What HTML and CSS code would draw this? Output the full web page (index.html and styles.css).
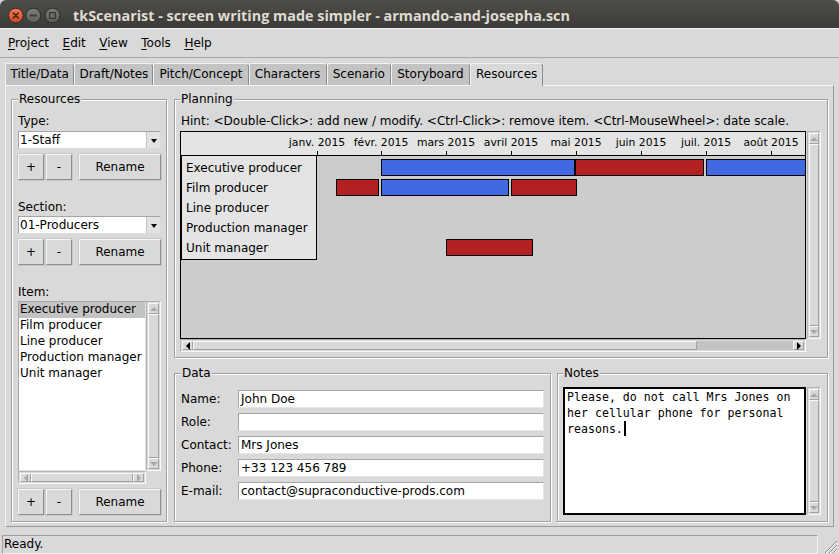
FILE: index.html
```html
<!DOCTYPE html>
<html>
<head>
<meta charset="utf-8">
<title>tkScenarist</title>
<link rel="stylesheet" href="styles.css">
</head>
<body>
<div class="window">
  <header class="titlebar">
    <svg class="wbtns" width="62" height="28" viewBox="0 0 62 28">
      <defs>
        <linearGradient id="gc" x1="0" y1="0" x2="0" y2="1"><stop offset="0" stop-color="#f47b55"/><stop offset="1" stop-color="#dc471c"/></linearGradient>
        <linearGradient id="gg" x1="0" y1="0" x2="0" y2="1"><stop offset="0" stop-color="#7f7e79"/><stop offset="1" stop-color="#5d5c58"/></linearGradient>
      </defs>
      <circle cx="15.8" cy="15.5" r="7.3" fill="url(#gc)" stroke="#2e2a27" stroke-width="1"/>
      <path d="M13.4 13.1 L18.2 17.9 M18.2 13.1 L13.4 17.9" stroke="#3f2a20" stroke-width="1.6" stroke-linecap="round"/>
      <circle cx="33.3" cy="15.5" r="7.3" fill="url(#gg)" stroke="#2e2d2a" stroke-width="1"/>
      <path d="M29.9 15.5 H36.7" stroke="#3a3935" stroke-width="1.8"/>
      <circle cx="52.5" cy="15.5" r="7.3" fill="url(#gg)" stroke="#2e2d2a" stroke-width="1"/>
      <rect x="49.6" y="12.6" width="5.8" height="5.8" fill="none" stroke="#3a3935" stroke-width="1.4"/>
    </svg>
    <div class="title">tkScenarist - screen writing made simpler - armando-and-josepha.scn</div>
  </header>

  <nav class="menubar">
    <span class="menu"><u>P</u>roject</span>
    <span class="menu"><u>E</u>dit</span>
    <span class="menu"><u>V</u>iew</span>
    <span class="menu"><u>T</u>ools</span>
    <span class="menu"><u>H</u>elp</span>
  </nav>

  <div class="notebook">
    <div class="tabs">
      <div class="tab">Title/Data</div>
      <div class="tab tight">Draft/Notes</div>
      <div class="tab">Pitch/Concept</div>
      <div class="tab">Characters</div>
      <div class="tab">Scenario</div>
      <div class="tab">Storyboard</div>
      <div class="tab sel">Resources</div>
    </div>
    <div class="pane">
      <fieldset class="lf res">
        <legend>Resources</legend>
        <div class="res-inner">
          <div class="lbl">Type:</div>
          <div class="combo"><span class="ctext">1-Staff</span><span class="carrow"></span></div>
          <div class="btnrow"><div class="btn sq">+</div><div class="btn sq">-</div><div class="btn wide">Rename</div></div>

          <div class="lbl gap">Section:</div>
          <div class="combo"><span class="ctext">01-Producers</span><span class="carrow"></span></div>
          <div class="btnrow"><div class="btn sq">+</div><div class="btn sq">-</div><div class="btn wide">Rename</div></div>

          <div class="lbl gap">Item:</div>
          <div class="listarea">
            <div class="listbox">
              <div class="li selitem">Executive producer</div>
              <div class="li">Film producer</div>
              <div class="li">Line producer</div>
              <div class="li">Production manager</div>
              <div class="li">Unit manager</div>
            </div>
            <div class="vsb"><span class="arr up"></span><span class="thumb"></span><span class="arr down"></span></div>
            <div class="hsb"><span class="arr left dis"></span><span class="thumb"></span><span class="arr right dis"></span></div>
          </div>
          <div class="btnrow"><div class="btn sq">+</div><div class="btn sq">-</div><div class="btn wide">Rename</div></div>
        </div>
      </fieldset>

      <div class="rightcol">
        <fieldset class="lf planning">
          <legend>Planning</legend>
          <div class="plan-inner">
            <div class="hint">Hint: &lt;Double-Click&gt;: add new / modify. &lt;Ctrl-Click&gt;: remove item. &lt;Ctrl-MouseWheel&gt;: date scale.</div>
            <div class="plangrid">
              <div class="canvas">
                <div class="gheader"></div>
                <span class="month" style="left:136px">janv. 2015</span>
                <span class="month" style="left:200px">févr. 2015</span>
                <span class="month" style="left:265px">mars 2015</span>
                <span class="month" style="left:330px">avril 2015</span>
                <span class="month" style="left:395px">mai 2015</span>
                <span class="month" style="left:460px">juin 2015</span>
                <span class="month" style="left:525px">juil. 2015</span>
                <span class="month" style="left:590px">août 2015</span>
                <span class="tick" style="left:136px"></span>
                <span class="tick" style="left:200px"></span>
                <span class="tick" style="left:265px"></span>
                <span class="tick" style="left:330px"></span>
                <span class="tick" style="left:395px"></span>
                <span class="tick" style="left:460px"></span>
                <span class="tick" style="left:525px"></span>
                <span class="tick" style="left:590px"></span>
                <div class="names">
                  <div>Executive producer</div>
                  <div>Film producer</div>
                  <div>Line producer</div>
                  <div>Production manager</div>
                  <div>Unit manager</div>
                </div>
                <div class="bar b" style="left:200px;top:27px;width:194px"></div>
                <div class="bar r" style="left:394px;top:27px;width:129px"></div>
                <div class="bar b" style="left:525px;top:27px;width:150px"></div>
                <div class="bar r" style="left:155px;top:47px;width:43px"></div>
                <div class="bar b" style="left:200px;top:47px;width:128px"></div>
                <div class="bar r" style="left:330px;top:47px;width:66px"></div>
                <div class="bar r" style="left:265px;top:107px;width:87px"></div>
              </div>
              <div class="vsb"><span class="arr up"></span><span class="thumb"></span><span class="arr down"></span></div>
              <div class="hsb active"><span class="arr left"></span><span class="thumb" style="width:504px"></span><span class="trough"></span><span class="arr right"></span></div>
            </div>
          </div>
        </fieldset>

        <div class="bottomrow">
          <fieldset class="lf data">
            <legend>Data</legend>
            <div class="form">
              <div class="flabel">Name:</div><div class="entry">John Doe</div>
              <div class="flabel">Role:</div><div class="entry"></div>
              <div class="flabel">Contact:</div><div class="entry">Mrs Jones</div>
              <div class="flabel">Phone:</div><div class="entry">+33 123 456 789</div>
              <div class="flabel">E-mail:</div><div class="entry">contact@supraconductive-prods.com</div>
            </div>
          </fieldset>
          <fieldset class="lf notes">
            <legend>Notes</legend>
            <div class="notes-inner">
              <div class="textbox">Please, do not call Mrs Jones on<br>her cellular phone for personal<br>reasons.<span class="cursor"></span></div>
              <div class="vsb"><span class="arr up"></span><span class="thumb"></span><span class="arr down"></span></div>
            </div>
          </fieldset>
        </div>
      </div>
    </div>
  </div>

  <footer class="statusbar">
    <div class="status">Ready.</div>
    <svg class="grip" width="16" height="16" viewBox="0 0 16 16">
      <path d="M15 3 L3 15 M15 7 L7 15 M15 11 L11 15" stroke="#8c8c8c" stroke-width="1"/>
      <path d="M15 4 L4 15 M15 8 L8 15 M15 12 L12 15" stroke="#f4f4f4" stroke-width="1"/>
    </svg>
  </footer>
</div>
</body>
</html>
```

FILE: styles.css
```css
* { box-sizing: border-box; }
html, body { margin: 0; padding: 0; }
body {
  width: 839px;
  height: 554px;
  overflow: hidden;
  background: #d9d9d9;
  font-family: "DejaVu Sans", sans-serif;
  font-size: 12px;
  color: #000;
}
.window {
  width: 839px;
  height: 554px;
  display: flex;
  flex-direction: column;
  background: #d9d9d9;
}

/* title bar */
.titlebar {
  flex: none;
  height: 28px;
  display: flex;
  align-items: center;
  background: linear-gradient(#4e4d49, #3c3b37);
  border-radius: 6px 6px 0 0;
}
.wbtns { flex: none; display: block; }
.title {
  margin-left: 11px;
  margin-top: 2px;
  color: #dfdbd2;
  font-family: "Open Sans", sans-serif;
  font-weight: 700;
  font-size: 14.4px;
  white-space: nowrap;
}

/* menu bar */
.menubar {
  flex: none;
  height: 30px;
  display: flex;
  align-items: center;
  gap: 13.5px;
  padding: 0 0 0 8px;
  border-top: 1px solid #ececec;
  border-bottom: 1px solid #a9a9a9;
}
.menu u { text-decoration: underline; text-underline-offset: 2px; }

/* notebook */
.notebook { flex: none; margin: 5px 5px 0 5px; }
.tabs { display: flex; height: 22px; position: relative; z-index: 1; }
.tab {
  padding: 0 5.2px;
  line-height: 20px;
  height: 22px;
  background: #c3c3c3;
  border: 1px solid;
  border-color: #f2f2f2 #8c8c8c #f2f2f2 #f2f2f2;
  border-bottom: none;
  border-radius: 2px 4px 0 0;
  white-space: nowrap;
}
.tab:first-child { padding: 0 4.5px; }
.tab.tight { padding: 0 4px; }
.tab.sel { background: #d9d9d9; height: 23px; }
.pane {
  height: 442px;
  border: 1px solid;
  border-color: #f4f4f4 #9a9a9a #9a9a9a #f4f4f4;
  padding: 6px 5px 4px 5px;
  display: grid;
  grid-template-columns: 156px 1fr;
  column-gap: 7px;
}

/* label frames */
fieldset.lf {
  margin: 0;
  min-width: 0;
  border: 1px solid #a0a0a0;
  box-shadow: inset 1px 1px 0 #fff, 1px 1px 0 #fff;
}
fieldset.lf legend {
  padding: 0 1px;
  margin: 0;
  line-height: 14px;
  background: #d9d9d9;
}

/* resources column */
.res { height: 430px; padding: 0 5px 6px 6px; }
.res-inner {
  height: 409px;
  padding-top: 8px;
  display: flex;
  flex-direction: column;
}
.lbl { line-height: 15px; height: 15px; }
.lbl.gap { margin-top: 20px; }
.combo {
  margin-top: 2px;
  height: 18px;
  display: flex;
  background: #fff;
  border: 1px solid;
  border-color: #a6a6a6 #dcdcdc #dcdcdc #a6a6a6;
}
.lbl.gap + .combo { margin-top: 1px; }
.ctext { flex: 1; padding-left: 1px; line-height: 16px; }
.carrow {
  width: 14px;
  background: #e2e2e2;
  border-left: 1px solid #c4c4c4;
  display: flex;
  align-items: center;
  justify-content: center;
}
.carrow::after {
  content: "";
  border-left: 3.5px solid transparent;
  border-right: 3.5px solid transparent;
  border-top: 4px solid #000;
  margin-top: 2px;
}
.btnrow { margin-top: 5px; height: 26px; display: flex; gap: 2px; }
.btn {
  height: 26px;
  display: flex;
  align-items: center;
  justify-content: center;
  background: #d9d9d9;
  border: 1px solid;
  border-color: #f6f6f6 #8e8e8e #8e8e8e #f6f6f6;
  box-shadow: 0 0 0 0.5px #b8b8b8;
}
.btn.sq { width: 26px; }
.btn.wide { flex: 1; margin-left: 5px; }

.listarea {
  margin-top: 1px;
  flex: 1;
  display: grid;
  grid-template-columns: 1fr 15px;
  grid-template-rows: 1fr 13px;
}
.listbox {
  background: #fff;
  border: 1px solid;
  border-color: #a6a6a6 #e0e0e0 #e0e0e0 #a6a6a6;
  overflow: hidden;
}
.li { line-height: 15px; height: 16px; padding-left: 1px; white-space: nowrap; }
.li.selitem { background: #c3c3c3; }

/* scrollbars */
.vsb {
  display: flex;
  flex-direction: column;
  background: #d9d9d9;
  border: 1px solid;
  border-color: #b4b4b4 #fafafa #fafafa #b4b4b4;
  padding: 1px;
}
.hsb {
  display: flex;
  background: #d9d9d9;
  border: 1px solid;
  border-color: #b4b4b4 #fafafa #fafafa #b4b4b4;
  padding: 1px;
}
.arr {
  flex: none;
  display: flex;
  align-items: center;
  justify-content: center;
  background: #d9d9d9;
  border: 1px solid;
  border-color: #fafafa #a3a3a3 #a3a3a3 #fafafa;
}
.vsb .arr { height: 11px; }
.hsb .arr { width: 11px; }
.thumb {
  flex: 1;
  background: #d9d9d9;
  border: 1px solid;
  border-color: #fafafa #a3a3a3 #a3a3a3 #fafafa;
}
.hsb.active .thumb { flex: none; }
.trough { flex: 1; background: #c3c3c3; }
.arr.up::after { content: ""; border-left: 4px solid transparent; border-right: 4px solid transparent; border-bottom: 4px solid #a8a8a8; }
.arr.down::after { content: ""; border-left: 4px solid transparent; border-right: 4px solid transparent; border-top: 4px solid #a8a8a8; }
.arr.left::after { content: ""; border-top: 4px solid transparent; border-bottom: 4px solid transparent; border-right: 4px solid #000; }
.arr.right::after { content: ""; border-top: 4px solid transparent; border-bottom: 4px solid transparent; border-left: 4px solid #000; }
.arr.left.dis::after { border-right-color: #a8a8a8; }
.arr.right.dis::after { border-left-color: #a8a8a8; }

/* right column */
.rightcol { display: flex; flex-direction: column; gap: 8px; }
.planning { height: 266px; padding: 0 6px 5px 5px; }
.plan-inner { padding-top: 8px; }
.hint { line-height: 15px; height: 15px; padding-left: 1px; white-space: nowrap; }
.plangrid {
  margin-top: 2px;
  display: grid;
  grid-template-columns: 626px 14px;
  grid-template-rows: 208px 13px;
  column-gap: 1px;
}
.canvas {
  position: relative;
  border: 1px solid #000;
  background: #cccccc;
  overflow: hidden;
}
.gheader {
  position: absolute;
  left: 0; top: 0;
  width: 624px;
  height: 24px;
  background: #e4e4e4;
  border-bottom: 1px solid #000;
}
.month {
  position: absolute;
  top: 4px;
  width: 90px;
  margin-left: -45px;
  text-align: center;
  font-size: 10.8px;
  line-height: 14px;
  white-space: nowrap;
}
.tick { position: absolute; top: 19px; width: 1px; height: 4px; background: #000; }
.names {
  position: absolute;
  left: 0; top: 23px;
  width: 136px;
  height: 105px;
  background: #e4e4e4;
  border: 1px solid #000;
  padding: 2px 0 0 4px;
}
.names div { line-height: 20px; white-space: nowrap; }
.bar { position: absolute; height: 17px; border: 1px solid #000; }
.bar.b { background: #4169e1; }
.bar.r { background: #b22222; }

.bottomrow {
  height: 156px;
  display: grid;
  grid-template-columns: 377px 271px;
  column-gap: 6px;
}
.data { padding: 0 6px; }
.form {
  padding-top: 10px;
  display: grid;
  grid-template-columns: 57px 306px;
  grid-auto-rows: 18px;
  row-gap: 5px;
}
.flabel { line-height: 18px; white-space: nowrap; }
.entry {
  background: #fff;
  border: 1px solid;
  border-color: #a6a6a6 #e6e6e6 #e6e6e6 #a6a6a6;
  line-height: 16px;
  padding-left: 2px;
  white-space: nowrap;
}
.notes { padding: 0 6px 6px 5px; }
.notes-inner {
  padding-top: 7px;
  display: grid;
  grid-template-columns: 243px 14px;
  grid-template-rows: 128px;
  column-gap: 1px;
}
.textbox {
  background: #fff;
  border: 2px solid #000;
  padding: 1px 2px;
  font-family: "DejaVu Sans Mono", monospace;
  font-size: 11.6px;
  line-height: 15.5px;
  white-space: nowrap;
}
.cursor {
  display: inline-block;
  width: 2px;
  height: 15px;
  background: #000;
  vertical-align: -3px;
  margin-left: 1px;
}

/* status bar */
.statusbar {
  flex: none;
  margin-top: 8px;
  height: 19px;
  display: flex;
  align-items: flex-start;
}
.status {
  margin-left: 2px;
  width: 816px;
  height: 19px;
  border: 1px solid;
  border-color: #9e9e9e #f2f2f2 #f2f2f2 #9e9e9e;
  line-height: 17px;
  padding-left: 1px;
}
.grip { margin-left: 4px; margin-top: 3px; display: block; }
```
